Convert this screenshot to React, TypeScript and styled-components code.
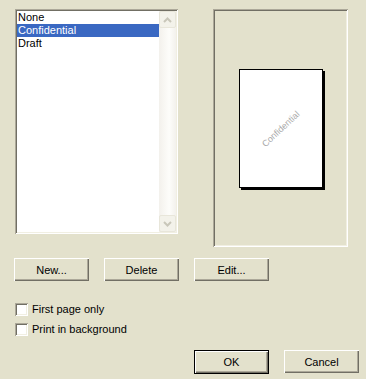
import React from "react";
import styled, { createGlobalStyle } from "styled-components";

const FACE = "#e3e1cc";
const SHADOW = "#aca899";
const DARK = "#716f64";
const LIGHT = "#f1efe2";

const Global = createGlobalStyle`
  html, body { margin: 0; padding: 0; background: ${FACE}; }
  body { font-family: "Liberation Sans", Arial, sans-serif; font-size: 11px; color: #000; }
`;

const Dialog = styled.div`
  width: 366px;
  height: 379px;
  box-sizing: border-box;
  padding: 9px 7px 0 14px;
  display: flex;
  flex-direction: column;
`;

const TopRow = styled.div`
  display: flex;
  align-items: flex-start;
`;

const sunken = `
  box-shadow: inset 1px 1px ${SHADOW}, inset -1px -1px #ffffff,
    inset 2px 2px ${DARK}, inset -2px -2px ${LIGHT};
`;

const ListBox = styled.div`
  margin-left: 1px;
  width: 163px;
  height: 225px;
  box-sizing: border-box;
  padding: 2px;
  background: #fff;
  ${sunken}
  display: flex;
`;

const Items = styled.div`
  flex: 1;
  display: flex;
  flex-direction: column;
`;

const Item = styled.div<{ $selected?: boolean }>`
  height: 13px;
  line-height: 13px;
  padding-left: 1px;
  white-space: nowrap;
  background: ${(p) => (p.$selected ? "#3a68c2" : "transparent")};
  color: ${(p) => (p.$selected ? "#fff" : "#000")};
`;

const ScrollBar = styled.div`
  width: 17px;
  display: flex;
  flex-direction: column;
  justify-content: space-between;
  background: linear-gradient(to right, #f3f1ec, #fdfdfa 60%, #f3f1ec);
`;

const ScrollButton = styled.div`
  width: 17px;
  height: 17px;
  box-sizing: border-box;
  border: 1px solid #e8e6da;
  border-radius: 2px;
  background: #f3f2ea;
  display: flex;
  align-items: center;
  justify-content: center;
`;

const Preview = styled.div`
  margin-left: 35px;
  width: 135px;
  height: 238px;
  box-sizing: border-box;
  ${sunken}
  display: flex;
  align-items: center;
  justify-content: center;
`;

const Page = styled.div`
  width: 84px;
  height: 119px;
  box-sizing: border-box;
  border: 1px solid #000;
  background: #fff;
  box-shadow: 2px 2px 0 #000;
  display: flex;
  align-items: center;
  justify-content: center;
  margin-top: 1px;
`;

const Watermark = styled.span`
  font-size: 9px;
  color: #a9a9a9;
  transform: rotate(-43deg);
  white-space: nowrap;
`;

const ButtonRow = styled.div<{ $right?: boolean; $top: number }>`
  margin-top: ${(p) => p.$top}px;
  display: flex;
  gap: 15px;
  justify-content: ${(p) => (p.$right ? "flex-end" : "flex-start")};
`;

const Button = styled.button<{ $default?: boolean }>`
  width: 75px;
  height: ${(p) => (p.$default ? "24px" : "23px")};
  padding: 0;
  margin: 0;
  font-family: "Liberation Sans", Arial, sans-serif;
  font-size: 11px;
  color: #000;
  background: ${FACE};
  border: ${(p) => (p.$default ? "1px solid #000" : "none")};
  box-shadow: inset 1px 1px #ffffff, inset -1px -1px ${DARK},
    inset -2px -2px ${SHADOW};
`;

const Checks = styled.div`
  margin-top: 22px;
  margin-left: 1px;
  display: flex;
  flex-direction: column;
  gap: 7px;
`;

const CheckRow = styled.label`
  display: flex;
  align-items: center;
  height: 13px;
  gap: 4px;
  line-height: 13px;
`;

const Box = styled.span`
  width: 13px;
  height: 13px;
  box-sizing: border-box;
  background: #fff;
  ${sunken}
`;

const Chevron = ({ up }: { up?: boolean }) => (
  <svg width="9" height="6" viewBox="0 0 9 6">
    <polyline
      points={up ? "1,5 4.5,1.5 8,5" : "1,1 4.5,4.5 8,1"}
      fill="none"
      stroke="#c9c7ba"
      strokeWidth="2"
    />
  </svg>
);

export default function App() {
  return (
    <>
      <Global />
      <Dialog>
        <TopRow>
          <ListBox>
            <Items>
              <Item>None</Item>
              <Item $selected>Confidential</Item>
              <Item>Draft</Item>
            </Items>
            <ScrollBar>
              <ScrollButton>
                <Chevron up />
              </ScrollButton>
              <ScrollButton>
                <Chevron />
              </ScrollButton>
            </ScrollBar>
          </ListBox>
          <Preview>
            <Page>
              <Watermark>Confidential</Watermark>
            </Page>
          </Preview>
        </TopRow>
        <ButtonRow $top={11}>
          <Button>New...</Button>
          <Button>Delete</Button>
          <Button>Edit...</Button>
        </ButtonRow>
        <Checks>
          <CheckRow>
            <Box />
            First page only
          </CheckRow>
          <CheckRow>
            <Box />
            Print in background
          </CheckRow>
        </Checks>
        <ButtonRow $right $top={14}>
          <Button $default>OK</Button>
          <Button>Cancel</Button>
        </ButtonRow>
      </Dialog>
    </>
  );
}
